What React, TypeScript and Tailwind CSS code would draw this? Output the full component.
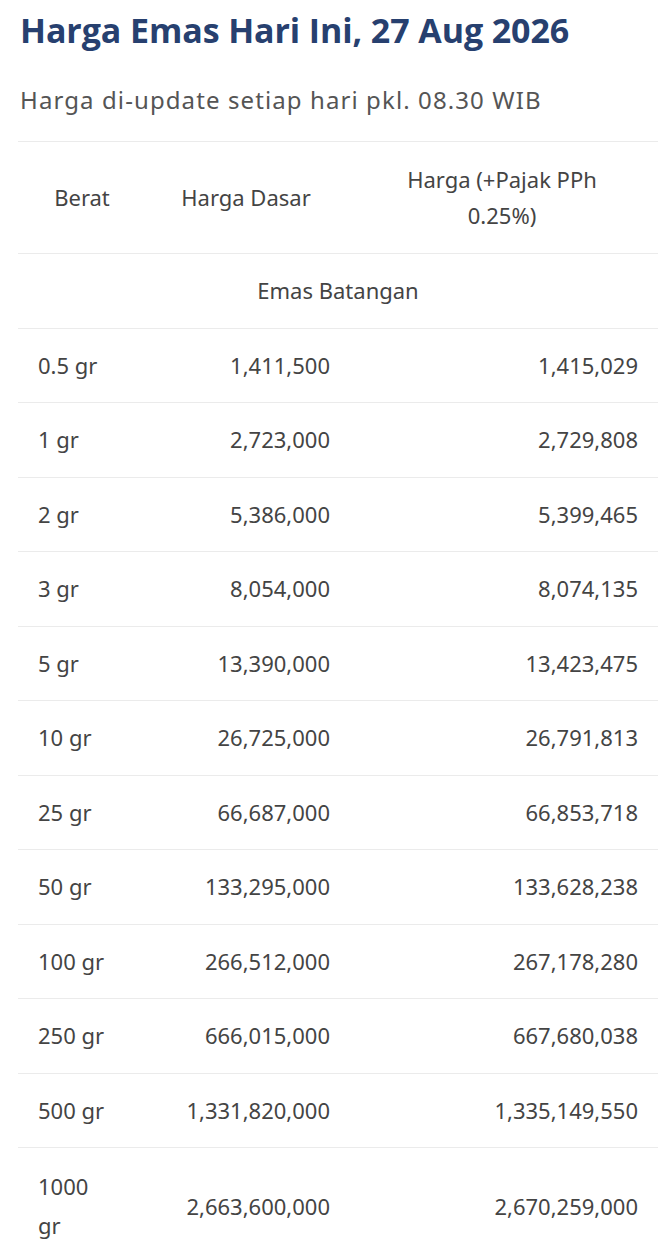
import React from "react";

const rows: [string, string, string][] = [
  ["0.5 gr", "1,411,500", "1,415,029"],
  ["1 gr", "2,723,000", "2,729,808"],
  ["2 gr", "5,386,000", "5,399,465"],
  ["3 gr", "8,054,000", "8,074,135"],
  ["5 gr", "13,390,000", "13,423,475"],
  ["10 gr", "26,725,000", "26,791,813"],
  ["25 gr", "66,687,000", "66,853,718"],
  ["50 gr", "133,295,000", "133,628,238"],
  ["100 gr", "266,512,000", "267,178,280"],
  ["250 gr", "666,015,000", "667,680,038"],
  ["500 gr", "1,331,820,000", "1,335,149,550"],
  ["1000 gr", "2,663,600,000", "2,670,259,000"],
];

export default function App() {
  return (
    <div className="w-[668px] min-h-[1256px] bg-white px-[18px] pt-[8px] font-['Open_Sans',sans-serif]">
      <h1 className="ml-[2px] text-[34px] leading-[44px] font-bold text-[#27406f] tracking-[-0.1px]">
        Harga Emas Hari Ini, 27 Aug 2026
      </h1>
      <p className="ml-[2px] mt-[32px] text-[24px] leading-[32px] text-[#555555] tracking-[1.1px] font-['Noto_Sans',sans-serif]">
        Harga di-update setiap hari pkl. 08.30 WIB
      </p>
      <table className="mt-[25px] w-[640px] table-fixed border-collapse text-[22px] text-[#444444] font-['Noto_Sans',sans-serif]">
        <colgroup>
          <col className="w-[128px]" />
          <col className="w-[200px]" />
          <col className="w-[312px]" />
        </colgroup>
        <thead>
          <tr className="border-t border-b border-[#ebebeb]">
            <th className="py-5 px-3 font-normal leading-[35.5px] text-center">Berat</th>
            <th className="py-5 px-3 font-normal leading-[35.5px] text-center">Harga Dasar</th>
            <th className="py-5 px-10 font-normal leading-[35.5px] text-center">Harga (+Pajak PPh 0.25%)</th>
          </tr>
        </thead>
        <tbody>
          <tr className="border-b border-[#ebebeb]">
            <td colSpan={3} className="py-[19px] leading-[35.5px] text-center">
              Emas Batangan
            </td>
          </tr>
          {rows.map((r, i) => {
            const last = i === rows.length - 1;
            return (
              <tr key={i} className={last ? "" : "border-b border-[#ebebeb]"}>
                <td className={`py-[19px] pl-5 pr-[30px] text-left ${last ? "leading-[39px]" : "leading-[35.5px]"}`}>{r[0]}</td>
                <td className={`py-[19px] pr-4 text-right ${last ? "leading-[39px]" : "leading-[35.5px]"}`}>{r[1]}</td>
                <td className={`py-[19px] pr-5 text-right ${last ? "leading-[39px]" : "leading-[35.5px]"}`}>{r[2]}</td>
              </tr>
            );
          })}
        </tbody>
      </table>
    </div>
  );
}
